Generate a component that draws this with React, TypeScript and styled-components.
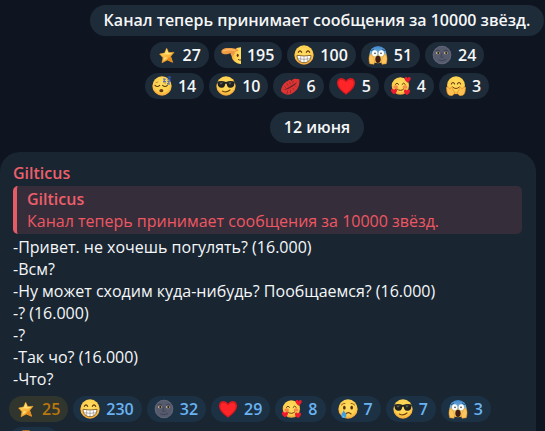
import React from "react";
import styled, { createGlobalStyle, css } from "styled-components";

const GlobalStyle = createGlobalStyle`
  * { box-sizing: border-box; }
  html, body { margin: 0; background: #0e1520; }
  body { overflow: hidden; font: 16px/22px "Open Sans", "Noto Sans", sans-serif; }
`;

const Chat = styled.main`
  height: 100vh;
  overflow: hidden;
  padding-top: 5px;
  display: flex;
  flex-direction: column;
  color: #f5f7f9;
`;

const Service = styled.section`
  display: flex;
  flex-direction: column;
  align-items: center;
  flex-shrink: 0;
  padding-left: 89px;
`;

const ServicePill = styled.div`
  display: block;
  padding: 4px 14px 5px;
  border-radius: 16px;
  background: #1e2b38;
  font-weight: 600;
  white-space: nowrap;
`;

const DateSlot = styled.div`
  padding: 13px 0 9px;
`;

const Reactions = styled.div<{ $centered?: boolean }>`
  display: flex;
  flex-wrap: wrap;
  gap: 5px;
  ${(p) =>
    p.$centered
      ? css`
          justify-content: center;
          max-width: 360px;
          padding-top: 6px;
        `
      : css`
          padding: 6px 9px 0;
        `}
`;

type Tone = "service" | "bubble" | "paid";

const tones: Record<Tone, { bg: string; fg: string }> = {
  service: { bg: "#1e2b38", fg: "#f5f7f9" },
  bubble: { bg: "#1c3244", fg: "#6bb2f2" },
  paid: { bg: "#30352d", fg: "#b8780f" },
};

const ReactionButton = styled.button<{ $tone: Tone }>`
  display: flex;
  align-items: center;
  gap: 6px;
  height: 26px;
  min-width: 50px;
  padding: 0 8px 0 7px;
  border: 0;
  border-radius: 13px;
  font: inherit;
  font-weight: 600;
  cursor: pointer;
  background: ${(p) => tones[p.$tone].bg};
  color: ${(p) => tones[p.$tone].fg};
`;

const Glyph = styled.svg`
  display: block;
  width: 20px;
  height: 20px;
  flex-shrink: 0;
`;

const Bubble = styled.article`
  flex: 1 0 auto;
  margin-right: 9px;
  padding-top: 10px;
  border-radius: 20px 20px 0 0;
  background: #192632;
`;

const Author = styled.div`
  padding-left: 13px;
  color: #ed5f6b;
  font-weight: 600;
`;

const Quote = styled.blockquote`
  margin: 2px 14px 2px 13px;
  padding: 2px 10px;
  border-left: 4px solid #e65c66;
  border-radius: 5px;
  background: #352d39;
  color: #ee5763;
`;

const QuoteAuthor = styled.div`
  color: #ed5f6b;
  font-weight: 600;
`;

const MessageText = styled.p`
  margin: 0;
  padding: 0 13px;
  white-space: pre-line;
`;

const Defs = styled.svg`
  position: absolute;
  width: 0;
  height: 0;
`;

const Face = () => <circle cx="30" cy="30" r="29" fill="url(#skin)" />;

const MiniHeart = ({ x, y }: { x: number; y: number }) => (
  <path
    transform={`translate(${x} ${y})`}
    d="M0 9C-7 4-10 0-9-4C-8-9-2-9 0-4C2-9 8-9 9-4C10 0 7 4 0 9Z"
    fill="#ee1c2e"
  />
);

const art = {
  star: (
    <>
      <path d="M29 10L35 23L51 22L41 34L47 52L31 45L15 53L18 38L8 27L23 24Z" fill="url(#gold)" strokeLinejoin="round" stroke="#f2a02c" strokeWidth="2" />
      <path d="M29 11L34 23L47 24L35 29L25 28L12 28L24 25Z" fill="#ffdf70" />
      <path d="M41 35L47 52L31 45L34 39Z" fill="#e58a1c" />
      <path d="M31 38L20 46L23 37Z" fill="#ffe88c" />
    </>
  ),
  salute: (
    <>
      <path d="M60 7C46 7 34 16 32 31C31 46 44 56 60 57Z" fill="url(#half)" />
      <path d="M1 22C0 14 9 9 19 9C31 8 43 10 51 14C54 17 51 19 45 19C41 21 42 27 37 31C32 34 28 31 29 25C20 28 4 31 1 22Z" fill="#ef9b43" />
      <path d="M9 17Q25 12 41 16" fill="none" stroke="#ffb864" strokeWidth="5" strokeLinecap="round" />
      <ellipse cx="50" cy="31" rx="3" ry="5" fill="#5a3210" />
      <path d="M51 43Q55 46 60 45" fill="none" stroke="#6b3a10" strokeWidth="3" />
    </>
  ),
  grin: (
    <>
      <Face />
      <path d="M13 22Q18 13 23 22M37 22Q42 13 47 22" fill="none" stroke="#53310e" strokeWidth="3.5" strokeLinecap="round" />
      <path d="M9 31Q30 35 51 31C51 45 42 53 30 53C18 53 9 45 9 31Z" fill="#fff" stroke="#74501f" strokeWidth="2.5" />
      <path d="M11 41Q30 45 49 41M20 34V49M30 35V52M40 34V49" fill="none" stroke="#8c8174" strokeWidth="1.8" />
    </>
  ),
  scream: (
    <>
      <circle cx="30" cy="29" r="26" fill="url(#fear)" />
      <path d="M17 13L10 17M43 13L50 17" stroke="#245d8c" strokeWidth="3" strokeLinecap="round" />
      <ellipse cx="20" cy="25" rx="8" ry="9" fill="#fff" />
      <ellipse cx="40" cy="25" rx="8" ry="9" fill="#fff" />
      <circle cx="21" cy="25" r="2.5" fill="#333" />
      <circle cx="39" cy="25" r="2.5" fill="#333" />
      <ellipse cx="30" cy="43" rx="8" ry="11" fill="#421d15" />
      <path d="M5 56C2 44 2 35 6 30L11 29L16 38C20 44 20 51 18 58ZM55 56C58 44 58 35 54 30L49 29L44 38C40 44 40 51 42 58Z" fill="#ffc65c" stroke="#e09638" strokeWidth="1.5" />
    </>
  ),
  moon: (
    <>
      <circle cx="30" cy="30" r="28" fill="#555a6d" />
      <circle cx="30" cy="30" r="26" fill="none" stroke="#5f6477" strokeWidth="3" />
      <path d="M11 18Q17 13 24 18M36 18Q43 13 49 18" fill="none" stroke="#3c4153" strokeWidth="3" />
      <ellipse cx="18" cy="24" rx="6" ry="4" fill="#d8c9a4" />
      <ellipse cx="42" cy="24" rx="6" ry="4" fill="#d8c9a4" />
      <circle cx="19" cy="24" r="3.5" fill="#302719" />
      <circle cx="43" cy="24" r="3.5" fill="#302719" />
      <path d="M30 25L26 36Q30 40 34 36M20 45Q30 50 41 44" fill="none" stroke="#3a3f51" strokeWidth="2.5" strokeLinecap="round" />
    </>
  ),
  sleep: (
    <>
      <Face />
      <path d="M9 28Q16 35 23 28M32 28Q39 35 46 28" fill="none" stroke="#5e3a0e" strokeWidth="3.5" strokeLinecap="round" />
      <path d="M11 20L19 18M34 20L42 22" stroke="#a66b1e" strokeWidth="2" />
      <ellipse cx="28" cy="44" rx="6" ry="5" fill="#633612" />
      <path d="M33 9H40L34 17H42M46 3H56L47 12H57M46 17H53L46 24H54" fill="none" stroke="#315fd4" strokeWidth="3" strokeLinejoin="round" />
    </>
  ),
  cool: (
    <>
      <Face />
      <path d="M3 17Q17 13 30 18Q43 13 57 17L55 24C54 33 49 36 42 35C35 35 33 29 32 23H28C27 29 25 35 18 35C11 36 6 33 5 24Z" fill="#222320" />
      <path d="M10 20L21 19L15 26ZM37 20L47 19L42 26Z" fill="#62625b" />
      <path d="M19 45Q31 52 42 42" fill="none" stroke="#70420e" strokeWidth="3.5" strokeLinecap="round" />
    </>
  ),
  kiss: (
    <>
      <path d="M3 45C4 31 12 19 24 15C28 10 32 11 34 15C40 7 48 8 58 10C60 25 55 40 42 49C30 59 15 59 3 45Z" fill="#de3431" />
      <path d="M11 41C20 38 25 34 32 30C39 26 45 22 51 18C48 25 42 30 35 33C28 38 19 42 11 41Z" fill="#6a2430" />
      <path d="M13 31L18 35M20 22L25 30M29 17L31 25M40 14L38 22M21 54L23 44M32 51L31 42M43 43L38 36M50 34L45 29" stroke="#8a2a32" strokeWidth="2.5" />
    </>
  ),
  heart: (
    <>
      <path d="M30 56C15 46 2 34 3 19C4 5 22 1 30 15C38 1 56 5 57 19C58 34 45 46 30 56Z" fill="#d71920" />
      <path d="M30 51C17 42 7 32 7 20C8 10 22 7 30 20C38 7 52 10 53 20C53 32 43 42 30 51Z" fill="#ff2427" />
    </>
  ),
  love: (
    <>
      <circle cx="28" cy="30" r="26" fill="url(#skin)" />
      <path d="M13 25Q18 17 23 25M33 25Q38 17 43 25" fill="none" stroke="#64380e" strokeWidth="3" strokeLinecap="round" />
      <ellipse cx="14" cy="33" rx="7" ry="5" fill="#f68b4c" />
      <ellipse cx="42" cy="33" rx="7" ry="5" fill="#f68b4c" />
      <path d="M18 39Q28 48 38 39" fill="none" stroke="#75400f" strokeWidth="3" strokeLinecap="round" />
      <MiniHeart x={50} y={11} />
      <MiniHeart x={48} y={48} />
      <MiniHeart x={9} y={46} />
    </>
  ),
  hug: (
    <>
      <circle cx="30" cy="28" r="27" fill="url(#skin)" />
      <path d="M16 24Q21 15 26 24M34 24Q39 15 44 24" fill="none" stroke="#64380e" strokeWidth="3.5" strokeLinecap="round" />
      <path d="M20 33Q30 43 40 33" fill="none" stroke="#75400f" strokeWidth="3" strokeLinecap="round" />
      <path d="M2 39C-1 34 3 31 7 35L12 39L16 33C21 31 20 37 21 42C28 48 26 57 17 59C7 60 2 52 2 39ZM58 39C61 34 57 31 53 35L48 39L44 33C39 31 40 37 39 42C32 48 34 57 43 59C53 60 58 52 58 39Z" fill="#ffc152" stroke="#d88929" strokeWidth="2" />
    </>
  ),
  cry: (
    <>
      <Face />
      <path d="M10 18Q15 12 21 13M39 13Q45 13 50 18" fill="none" stroke="#98601b" strokeWidth="3" strokeLinecap="round" />
      <ellipse cx="19" cy="26" rx="4" ry="5.5" fill="#51300e" />
      <ellipse cx="41" cy="26" rx="4" ry="5.5" fill="#51300e" />
      <path d="M23 45Q31 37 39 45" fill="none" stroke="#6b3d0d" strokeWidth="3.5" strokeLinecap="round" />
      <path d="M17 33C20 41 26 44 25 51C24 59 10 59 10 50C10 44 15 41 17 33Z" fill="#3d9fdf" />
      <path d="M14 50Q15 54 19 54" fill="none" stroke="#a5dcff" strokeWidth="2" />
    </>
  ),
  plain: (
    <>
      <Face />
      <path d="M19 2Q30-1 41 2" fill="none" stroke="#a96a2c" strokeWidth="4" />
    </>
  ),
};

interface ReactionData {
  icon: keyof typeof art;
  label: string;
  count?: number;
}

const serviceReactions: ReactionData[] = [
  { icon: "star", label: "Звезда", count: 27 },
  { icon: "salute", label: "Салют", count: 195 },
  { icon: "grin", label: "Улыбка", count: 100 },
  { icon: "scream", label: "Ужас", count: 51 },
  { icon: "moon", label: "Луна", count: 24 },
  { icon: "sleep", label: "Сон", count: 14 },
  { icon: "cool", label: "Круто", count: 10 },
  { icon: "kiss", label: "Поцелуй", count: 6 },
  { icon: "heart", label: "Сердце", count: 5 },
  { icon: "love", label: "Любовь", count: 4 },
  { icon: "hug", label: "Объятия", count: 3 },
];

const messageReactions: ReactionData[] = [
  { icon: "star", label: "Звезда", count: 25 },
  { icon: "grin", label: "Улыбка", count: 230 },
  { icon: "moon", label: "Луна", count: 32 },
  { icon: "heart", label: "Сердце", count: 29 },
  { icon: "love", label: "Любовь", count: 8 },
  { icon: "cry", label: "Грусть", count: 7 },
  { icon: "cool", label: "Круто", count: 7 },
  { icon: "scream", label: "Ужас", count: 3 },
  { icon: "plain", label: "Смайл" },
];

const Reaction = ({ data, tone }: { data: ReactionData; tone: Tone }) => (
  <ReactionButton type="button" $tone={tone} aria-label={`${data.label} ${data.count ?? ""}`.trim()}>
    <Glyph viewBox="0 0 60 60" aria-hidden="true">
      {art[data.icon]}
    </Glyph>
    {data.count !== undefined && <span>{data.count}</span>}
  </ReactionButton>
);

const messageLines = [
  "-Привет. не хочешь погулять? (16.000)",
  "-Всм?",
  "-Ну может сходим куда-нибудь? Пообщаемся? (16.000)",
  "-? (16.000)",
  "-?",
  "-Так чо? (16.000)",
  "-Что?",
];

export default function App() {
  return (
    <>
      <GlobalStyle />
      <Defs aria-hidden="true">
        <defs>
          <radialGradient id="skin" cx="50%" cy="40%" r="60%">
            <stop offset="0" stopColor="#ffdf63" />
            <stop offset="0.7" stopColor="#ffcf4d" />
            <stop offset="1" stopColor="#f0a136" />
          </radialGradient>
          <linearGradient id="half" x1="0" y1="0" x2="1" y2="0">
            <stop offset="0" stopColor="#f3ab3c" />
            <stop offset="0.4" stopColor="#ffd052" />
            <stop offset="1" stopColor="#ffdd60" />
          </linearGradient>
          <linearGradient id="gold" x1="0" y1="0" x2="1" y2="1">
            <stop offset="0" stopColor="#ffd95a" />
            <stop offset="1" stopColor="#f59a22" />
          </linearGradient>
          <linearGradient id="fear" x1="0" y1="0" x2="0" y2="1">
            <stop offset="0" stopColor="#3d86cf" />
            <stop offset="0.35" stopColor="#6fa9d4" />
            <stop offset="0.65" stopColor="#f2c865" />
            <stop offset="1" stopColor="#ffc14b" />
          </linearGradient>
        </defs>
      </Defs>
      <Chat>
        <Service>
          <ServicePill>Канал теперь принимает сообщения за 10000 звёзд.</ServicePill>
          <Reactions $centered>
            {serviceReactions.map((r) => (
              <Reaction key={r.icon} data={r} tone="service" />
            ))}
          </Reactions>
          <DateSlot>
            <ServicePill as="time">12 июня</ServicePill>
          </DateSlot>
        </Service>
        <Bubble>
          <Author>Gilticus</Author>
          <Quote>
            <QuoteAuthor>Gilticus</QuoteAuthor>
            Канал теперь принимает сообщения за 10000 звёзд.
          </Quote>
          <MessageText>{messageLines.join("\n")}</MessageText>
          <Reactions>
            {messageReactions.map((r) => (
              <Reaction key={r.icon} data={r} tone={r.icon === "star" ? "paid" : "bubble"} />
            ))}
          </Reactions>
        </Bubble>
      </Chat>
    </>
  );
}
